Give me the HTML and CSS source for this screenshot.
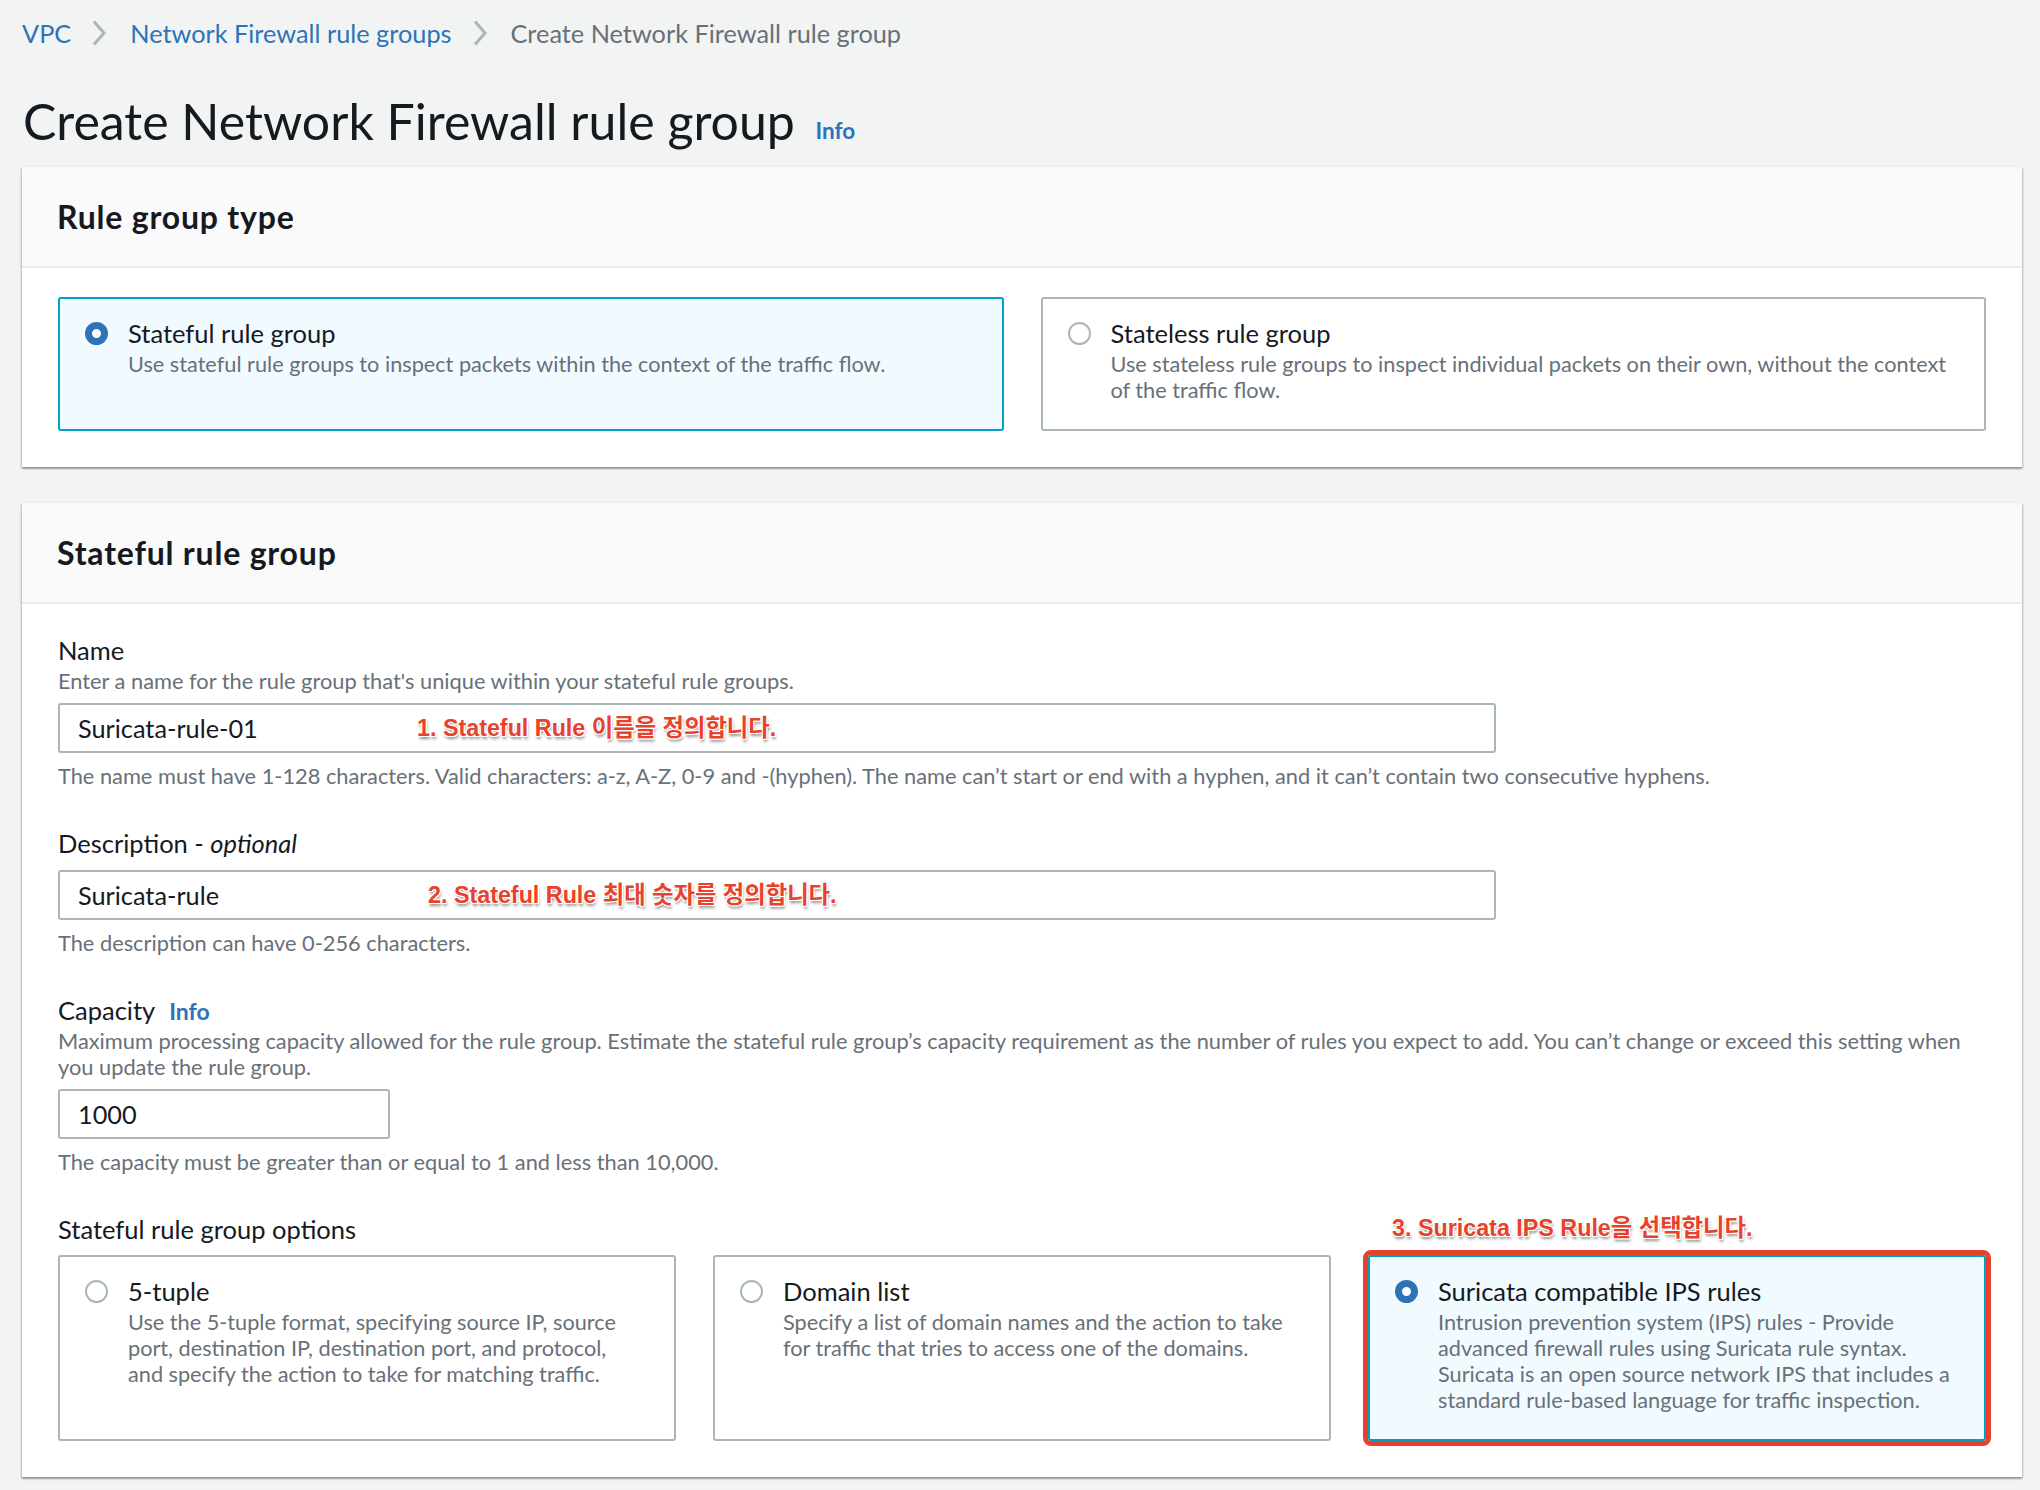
FILE: index.html
```html
<!DOCTYPE html>
<html lang="en">
<head>
<meta charset="utf-8">
<title>Create Network Firewall rule group</title>
<link rel="stylesheet" href="styles.css">
</head>
<body>
<div class="page">
  <nav class="breadcrumbs">
    <a class="crumb-link" href="#">VPC</a>
    <svg class="chev" width="14" height="26" viewBox="0 0 14 26"><polyline points="2,1.5 12,13 2,24.5" fill="none" stroke="#aab7b8" stroke-width="3"/></svg>
    <a class="crumb-link" href="#">Network Firewall rule groups</a>
    <svg class="chev" width="14" height="26" viewBox="0 0 14 26"><polyline points="2,1.5 12,13 2,24.5" fill="none" stroke="#aab7b8" stroke-width="3"/></svg>
    <span class="crumb-current">Create Network Firewall rule group</span>
  </nav>

  <h1 class="page-title">Create Network Firewall rule group <a class="info" href="#">Info</a></h1>

  <section class="panel">
    <header class="panel-header"><h2>Rule group type</h2></header>
    <div class="panel-body">
      <div class="tiles two">
        <div class="tile selected">
          <span class="radio checked"></span>
          <div class="tile-text">
            <div class="tile-title">Stateful rule group</div>
            <div class="tile-desc">Use stateful rule groups to inspect packets within the context of the traffic flow.</div>
          </div>
        </div>
        <div class="tile">
          <span class="radio"></span>
          <div class="tile-text">
            <div class="tile-title">Stateless rule group</div>
            <div class="tile-desc">Use stateless rule groups to inspect individual packets on their own, without the context of the traffic flow.</div>
          </div>
        </div>
      </div>
    </div>
  </section>

  <section class="panel second">
    <header class="panel-header"><h2>Stateful rule group</h2></header>
    <div class="panel-body form">
      <div class="field">
        <div class="label">Name</div>
        <div class="field-desc">Enter a name for the rule group that's unique within your stateful rule groups.</div>
        <div class="input-wrap wide">
          <div class="input">Suricata-rule-01</div>
          <span class="note note1">1. Stateful Rule 이름을 정의합니다.</span>
        </div>
        <div class="constraint">The name must have 1-128 characters. Valid characters: a-z, A-Z, 0-9 and -(hyphen). The name can’t start or end with a hyphen, and it can’t contain two consecutive hyphens.</div>
      </div>

      <div class="field">
        <div class="label">Description - <i>optional</i></div>
        <div class="input-wrap wide no-desc">
          <div class="input">Suricata-rule</div>
          <span class="note note2">2. Stateful Rule 최대 숫자를 정의합니다.</span>
        </div>
        <div class="constraint">The description can have 0-256 characters.</div>
      </div>

      <div class="field">
        <div class="label">Capacity <a class="info small" href="#">Info</a></div>
        <div class="field-desc">Maximum processing capacity allowed for the rule group. Estimate the stateful rule group’s capacity requirement as the number of rules you expect to add. You can’t change or exceed this setting when you update the rule group.</div>
        <div class="input-wrap narrow">
          <div class="input">1000</div>
        </div>
        <div class="constraint">The capacity must be greater than or equal to 1 and less than 10,000.</div>
      </div>

      <div class="field last">
        <div class="label options-label">Stateful rule group options
          <span class="note note3">3. Suricata IPS Rule을 선택합니다.</span>
        </div>
        <div class="tiles three">
          <div class="tile">
            <span class="radio"></span>
            <div class="tile-text">
              <div class="tile-title">5-tuple</div>
              <div class="tile-desc">Use the 5-tuple format, specifying source IP, source port, destination IP, destination port, and protocol, and specify the action to take for matching traffic.</div>
            </div>
          </div>
          <div class="tile">
            <span class="radio"></span>
            <div class="tile-text">
              <div class="tile-title">Domain list</div>
              <div class="tile-desc">Specify a list of domain names and the action to take for traffic that tries to access one of the domains.</div>
            </div>
          </div>
          <div class="tile selected highlighted">
            <span class="radio checked"></span>
            <div class="tile-text">
              <div class="tile-title">Suricata compatible IPS rules</div>
              <div class="tile-desc">Intrusion prevention system (IPS) rules - Provide advanced firewall rules using Suricata rule syntax. Suricata is an open source network IPS that includes a standard rule-based language for traffic inspection.</div>
            </div>
          </div>
        </div>
      </div>
    </div>
  </section>
</div>
</body>
</html>
```

FILE: styles.css
```css
* { box-sizing: border-box; }
html, body { margin: 0; padding: 0; }
body {
  background: #f2f3f3;
  font-family: Lato, "Noto Sans", sans-serif;
  color: #16191f;
  width: 2040px;
  height: 1490px;
  overflow: hidden;
}
a { text-decoration: none; }

.page {
  padding: 14px 18px 0 22px;
}

.breadcrumbs {
  display: flex;
  align-items: center;
  height: 38px;
  font-size: 25.3px;
  line-height: 38px;
}
.crumb-link { color: #2e73b8; }
.crumb-current { color: #687078; }
.chev { margin: 0 24px 0 21px; flex: none; }

.page-title {
  margin: 39px 0 16px 1px;
  font-size: 50px;
  font-weight: 400;
  line-height: 60px;
  height: 60px;
  color: #16191f;
}
.info {
  color: #2e73b8;
  font-weight: 700;
  font-size: 22.5px;
  line-height: 1;
  margin-left: 8px;
  vertical-align: 1px;
}
.info.small { font-size: 23px; margin-left: 8px; vertical-align: 0; }

.panel {
  background: #fff;
  width: 2000px;
  box-shadow: 0 2px 2px 0 rgba(0,28,36,0.3), 1px 1px 2px 0 rgba(0,28,36,0.15), -1px 1px 2px 0 rgba(0,28,36,0.15);
}
.panel.second { margin-top: 36px; }

.panel-header {
  background: #fafafa;
  border-bottom: 2px solid #eaeded;
  height: 101px;
  display: flex;
  align-items: center;
  padding: 0 35px;
}
.panel-header h2 {
  margin: 0;
  font-size: 32px;
  letter-spacing: 0.8px;
  font-weight: 700;
  color: #16191f;
}

.panel-body {
  padding: 29px 36px 36px 36px;
}
.panel-body.form { padding-top: 31px; }

.tiles {
  display: grid;
  column-gap: 37px;
}
.tiles.two { grid-template-columns: 1fr 1fr; }
.tiles.three { grid-template-columns: 1fr 1fr 1fr; }

.tile {
  display: flex;
  align-items: flex-start;
  border: 2px solid #aab7b8;
  border-radius: 3px;
  background: #fff;
  padding: 19px 31px 20px 25px;
}
.tiles.two .tile { height: 134px; }
.tiles.three .tile { height: 186px; }
.tile.selected {
  background: #f1faff;
  border-color: #00a1c9;
}
.tile.highlighted {
  outline: 5px solid #e8412c;
  outline-offset: 0;
}

.radio {
  flex: none;
  width: 23px;
  height: 23px;
  border-radius: 50%;
  border: 2px solid #aab7b8;
  background: #fff;
  margin-top: 4px;
  margin-right: 20px;
}
.radio.checked {
  border: 7px solid #2e73b8;
}

.tile-title {
  font-size: 25.5px;
  line-height: 30px;
  color: #16191f;
}
.tile-desc {
  margin-top: 3px;
  font-size: 21.7px;
  line-height: 26px;
  color: #687078;
}

.field { margin-bottom: 39px; }
.field.last { margin-bottom: 0; }
.label {
  font-size: 25.5px;
  line-height: 30px;
  height: 30px;
  color: #16191f;
}
.label i { font-style: italic; }
.field-desc {
  margin-top: 3px;
  font-size: 21.8px;
  line-height: 26px;
  color: #687078;
}
.input-wrap {
  position: relative;
  margin-top: 9px;
}
.input-wrap.no-desc { margin-top: 12px; }
.input-wrap.wide { width: 1438px; }
.input-wrap.narrow { width: 332px; }
.input {
  height: 50px;
  border: 2px solid #aab7b8;
  border-radius: 3px;
  background: #fff;
  padding: 0 18px;
  font-size: 25.3px;
  line-height: 46px;
  color: #16191f;
}
.constraint {
  margin-top: 10px;
  font-size: 21.8px;
  line-height: 26px;
  color: #687078;
}

.options-label {
  position: relative;
  margin-bottom: 11px;
}

.note {
  position: absolute;
  font-family: "Liberation Sans", "Noto Sans CJK KR", sans-serif;
  font-weight: 700;
  font-size: 23.3px;
  line-height: 30px;
  color: #e8412c;
  white-space: nowrap;
  text-shadow: 1px 0 0 #fff, -1px 0 0 #fff, 0 1px 0 #fff, 0 -1px 0 #fff, 1px 1px 0 #fff, -1px -1px 0 #fff, 1px -1px 0 #fff, -1px 1px 0 #fff, 1px 3px 3px rgba(0,0,0,0.45);
}
.note1 { left: 359px; top: 10px; }
.note2 { left: 370px; top: 10px; }
.note3 { left: 1334px; top: -1px; }
```
